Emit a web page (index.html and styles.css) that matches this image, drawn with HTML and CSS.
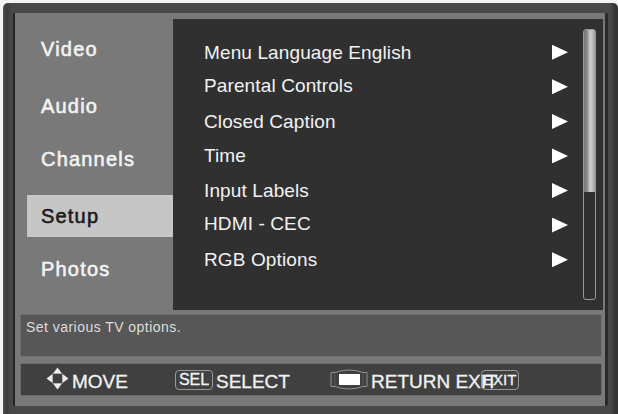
FILE: index.html
```html
<!DOCTYPE html>
<html lang="en">
<head>
<meta charset="UTF-8">
<title>Setup</title>
<meta name="viewport" content="width=device-width, initial-scale=1">
<link rel="stylesheet" href="styles.css">
</head>
<body>
  <div class="frame">
    <div class="screen">
      <div class="main">
        <!-- Categories -->
        <ul class="sidebar">
          <li>Video</li>
          <li>Audio</li>
          <li>Channels</li>
          <li class="active">Setup</li>
          <li>Photos</li>
        </ul>

        <!-- Options -->
        <div class="panel">
          <ul class="options">
            <li><span>Menu Language English</span><i class="arrow"></i></li>
            <li><span>Parental Controls</span><i class="arrow"></i></li>
            <li><span>Closed Caption</span><i class="arrow"></i></li>
            <li><span>Time</span><i class="arrow"></i></li>
            <li><span>Input Labels</span><i class="arrow"></i></li>
            <li><span>HDMI - CEC</span><i class="arrow"></i></li>
            <li><span>RGB Options</span><i class="arrow"></i></li>
          </ul>
          <div class="scrollbar"><div class="thumb"></div></div>
        </div>
      </div>

      <div class="description">Set various TV options.</div>

      <!-- Remote key hints -->
      <div class="footer">
        <div class="hint move">
          <svg width="23" height="23" viewBox="0 0 23 23">
            <path d="M6.500 6.500h10v10h-10z" fill="none" stroke="#777"/>
            <path d="M11.500 .5l4.500 6H7zM11.500 22.500l4.500-6H7zM.5 11.500l6-4.500v9zM22.500 11.500l-6-4.500v9z" fill="#eee"/>
          </svg>
          <span>MOVE</span>
        </div>
        <div class="hint select">
          <span class="key">SEL</span>
          <span>SELECT</span>
        </div>
        <div class="hint return">
          <svg width="38" height="21" viewBox="0 0 38 21">
            <path d="M1 3.500h4Q19-1.500 33 3.500h4v14h-4Q19 22.500 5 17.500H1z" fill="none" stroke="#909090" stroke-width="1"/>
            <path d="M5 4v13M33 4v13" stroke="#555"/>
            <rect x="9" y="5" width="21" height="11" fill="#fff"/>
          </svg>
          <span>RETURN EXIT</span>
          <span class="key exit">EXIT</span>
        </div>
      </div>
    </div>
  </div>
</body>
</html>
```

FILE: styles.css
```css
:root {
  --frame: #484848;
  --gray: #797979;
  --panel: #303030;
  --text: #f2f2f2;
}

* { box-sizing: border-box; margin: 0; padding: 0; }
body {
  width: 618px;
  height: 414px;
  padding: 3px 0 0 3px;
  overflow: hidden;
  background: #f4f4f4;
  font-family: "Liberation Sans", Arial, sans-serif;
  font-size: 19px;
  color: var(--text);
}
ul { list-style: none; }

/* TV bezel */
.frame {
  width: 615px;
  height: 411px;
  padding: 10px 10px 8px 10px;
  background: linear-gradient(90deg, #555 0, #3c3c3c 3px, transparent 8px, transparent 606px, #4a4a4a 607px, #333 612px), var(--frame);
  border-radius: 5px 5px 0 0;
}
.screen {
  height: 393px;
  padding-right: 2px;
  background: var(--gray);
  border-left: 2px solid #222;
  border-right: 3px solid #2a2a2a;
  border-radius: 2px;
}

/* Top area */
.main {
  display: flex;
  height: 297px;
}
.sidebar {
  width: 158px;
  padding: 15px 0 0 12px;
}
.sidebar li {
  height: 42px;
  margin-bottom: 11px;
  padding-left: 14px;
  font-size: 20px;
  line-height: 43px;
  letter-spacing: 1.2px;
  -webkit-text-stroke: 0.6px;
}
.sidebar li:nth-child(1),
.sidebar li:nth-child(3) { margin-bottom: 15px; }
.sidebar .active {
  background: #c6c6c6;
  color: #1c1c1c;
}
.panel {
  display: flex;
  flex: 1;
  height: 291px;
  margin-top: 6px;
  background: var(--panel);
}
.options {
  flex: 1;
  padding: 16px 15px 0 31px;
  letter-spacing: 0.12px;
}
.options li {
  display: flex;
  justify-content: space-between;
  align-items: center;
  height: 34.57px;
}
.options li:nth-child(1) span,
.options li:nth-child(3) span { padding-top: 2px; }
.options li:nth-child(2) span { padding-bottom: 1px; }
.options li:nth-child(6) span { padding-bottom: 3px; }
.arrow {
  width: 16px;
  height: 15px;
  background: #fff;
  clip-path: polygon(0 0, 100% 50%, 0 100%);
}
.scrollbar {
  width: 13px;
  height: 271px;
  margin: 10px 7px 0 0;
  border: 1px solid #999;
  border-radius: 3px;
}
.thumb {
  height: 162px;
  background: linear-gradient(90deg, #777 0, #888 3px, #ccc 6px, #c4c4c4 8px, #999 11px);
}

/* Bottom bars */
.description {
  width: 580px;
  height: 41px;
  margin: 5px 0 0 6px;
  padding: 4px 5px;
  background: #575757;
  box-shadow: 0 0 1px #444;
  font-size: 14px;
  line-height: 17px;
  letter-spacing: 0.46px;
  color: #ddd;
}
.footer {
  display: flex;
  align-items: center;
  width: 580px;
  height: 31px;
  margin: 8px 0 0 6px;
  background: #404040;
  box-shadow: 0 0 1px #333;
  line-height: 31px;
}
.hint {
  display: flex;
  align-items: center;
  white-space: nowrap;
  -webkit-text-stroke: 0.3px;
}
.hint span { padding-top: 3px; }
.move { width: 154px; padding-left: 25px; }
.move svg { margin-bottom: 2px; }
.move span { margin-left: 3px; }
.select { width: 155px; }
.select .key { margin-right: 3px; }
.return svg { margin-right: 3px; }
.hint .key {
  height: 20px;
  width: 38px;
  padding: 0;
  border: 1px solid #999;
  border-radius: 4px;
  font-size: 16px;
  line-height: 18px;
  text-align: center;
}
/* EXIT key sits over the end of its label */
.hint .exit {
  margin-left: -17px;
  font-size: 15px;
}
```
